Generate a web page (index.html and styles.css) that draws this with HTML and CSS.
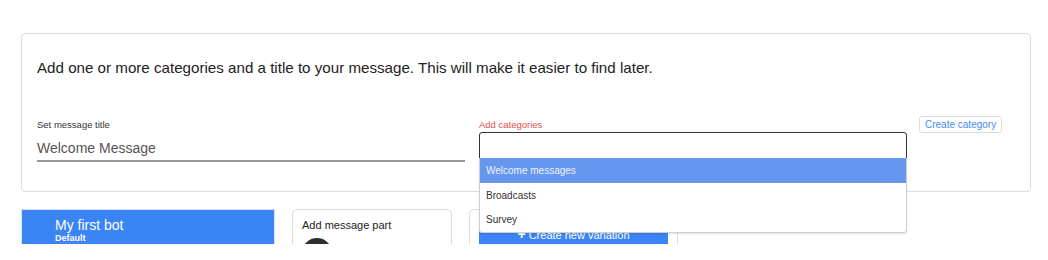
FILE: index.html
```html
<!DOCTYPE html>
<html>
<head>
<meta charset="utf-8">
<link rel="stylesheet" href="styles.css">
</head>
<body>
<div class="page">
  <section class="panel">
    <p class="intro">Add one or more categories and a title to your message. This will make it easier to find later.</p>
    <div class="fields">
      <div class="field title-field">
        <label class="label">Set message title</label>
        <div class="title-input">Welcome Message</div>
      </div>
      <div class="field cat-field">
        <label class="label label-error">Add categories</label>
        <div class="combo">
          <div class="combo-input"></div>
          <ul class="menu">
            <li class="menu-item active">Welcome messages</li>
            <li class="menu-item">Broadcasts</li>
            <li class="menu-item">Survey</li>
          </ul>
        </div>
      </div>
      <button class="create-btn">Create category</button>
    </div>
  </section>
  <div class="cards">
    <div class="bot-card">
      <div class="bot-name">My first bot</div>
      <div class="bot-sub">Default</div>
    </div>
    <div class="part-card">
      <div class="part-title">Add message part</div>
      <div class="avatar"></div>
    </div>
    <div class="var-card">
      <div class="var-btn"><span class="plus">+</span> Create new variation</div>
    </div>
  </div>
</div>
</body>
</html>
```
FILE: styles.css
```css
* { box-sizing: border-box; }
html, body { margin: 0; padding: 0; background: #fff; }
body { font-family: "Liberation Sans", Arial, sans-serif; color: #222; }
.page { padding: 33px 17px 0 21px; height: 244px; overflow: hidden; }
.panel {
  border: 1px solid #dcdcdc;
  border-radius: 4px;
  height: 159px;
  padding: 0 0 0 15px;
  position: relative;
  z-index: 2;
}
.intro { margin: 25px 0 0; font-size: 15.15px; line-height: 18px; color: #222; }
.fields { display: flex; align-items: flex-start; margin-top: 42px; }
.field { display: flex; flex-direction: column; }
.title-field { width: 428px; margin-right: 14px; }
.cat-field { width: 428px; margin-right: 12px; }
.label { font-size: 9.5px; line-height: 12px; color: #333; }
.label-error { color: #e0524e; }
.title-input {
  margin-top: 7px;
  font-size: 14px;
  line-height: 20px;
  color: #555;
  padding-bottom: 2px;
  border-bottom: 2px solid #999;
}
.combo { margin-top: 1px; position: relative; }
.combo-input {
  height: 27px;
  border: 1px solid #333;
  border-radius: 3px 3px 0 0;
  background: #fff;
}
.menu {
  list-style: none;
  margin: 0;
  padding: 0;
  position: absolute;
  left: 0;
  top: 26px;
  width: 428px;
  background: #fff;
  border: 1px solid #cfcfcf;
  border-top: none;
  border-radius: 0 0 3px 3px;
  box-shadow: 0 1px 2px rgba(0,0,0,0.12);
}
.menu-item { height: 24.5px; line-height: 25px; padding-left: 6px; font-size: 10px; color: #333; }
.menu-item.active { background: #6796ef; color: #eef3ff; }
.create-btn {
  margin-top: -3px;
  height: 17px;
  padding: 0 5px;
  font-family: inherit;
  font-size: 10px;
  color: #4a8bf5;
  background: #fff;
  border: 1px solid #dcdcdc;
  border-radius: 3px;
}
.cards { display: flex; align-items: flex-start; gap: 17px; margin-top: 17px; }
.bot-card {
  width: 254px;
  height: 60px;
  background: #3b84f5;
  border: 1px solid #d6e3f7;
  padding: 7px 0 0 33px;
  color: #fff;
}
.bot-name { font-size: 14px; line-height: 16px; }
.bot-sub { font-size: 9px; line-height: 10px; font-weight: bold; }
.part-card {
  width: 160px;
  height: 60px;
  border: 1px solid #dcdcdc;
  border-radius: 5px;
  padding: 8px 0 0 9px;
}
.part-title { font-size: 11px; line-height: 14px; color: #222; }
.avatar { width: 30px; height: 30px; border-radius: 50%; background: #2e2e2e; margin-top: 6px; }
.var-card {
  width: 209px;
  height: 60px;
  border: 1px solid #dcdcdc;
  border-radius: 5px;
  padding: 14px 9px 0 9px;
}
.var-btn {
  height: 30px;
  background: #3b84f5;
  color: #fff;
  font-size: 11px;
  text-align: center;
  line-height: 20px;
}
.plus { font-weight: bold; font-size: 14px; }
```
